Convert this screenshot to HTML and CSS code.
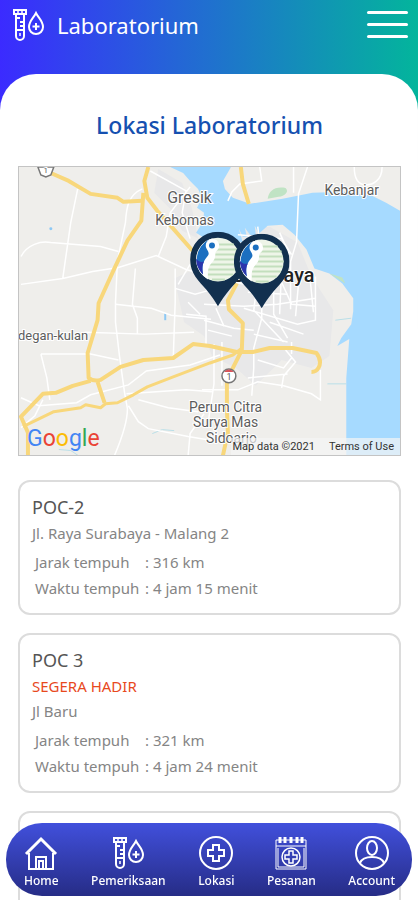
FILE: index.html
```html
<!DOCTYPE html>
<html lang="id">
<head>
  <meta charset="UTF-8">
  <meta name="viewport" content="width=device-width, initial-scale=1.0">
  <title>Laboratorium</title>
  <link rel="stylesheet" href="styles.css">
</head>
<body>
  <!-- shared icons -->
  <svg class="symbols" aria-hidden="true">
    <symbol id="icon-lab" viewBox="0 0 32 34">
      <path d="M2 2h12v4H2z"/>
      <path d="M5 4h2M9 4h2" stroke-width="1.500"/>
      <path d="M4 6v22a4 4 0 0 0 8 0V6M4 10h4M8 14h4M8 18h4M4 22h8"/>
      <path d="M8 25v3" stroke-width="1.500"/>
      <path d="M24 5c-2.500 5-7 8-7 14a7 7 0 0 0 14 0c0-6-4.500-9-7-14z"/>
      <path d="M24 15v7M20.500 18.500h7"/>
    </symbol>
    <symbol id="pin" viewBox="0 0 56 76">
      <path d="M28 0A28 28 0 0 0 0 28c0 14 9 22 16 30 5 6 9 12 12 17 3-5 7-11 12-17 7-8 16-16 16-30A28 28 0 0 0 28 0z" fill="#12304f"/>
      <circle cx="28" cy="28" r="22" fill="#eef5e8"/>
      <path d="M28 13h16M24 18h24M22 23h27M20 28h30M19 33h30M18 38h29M18 43h25M22 48h13" stroke="#c3dfbd" stroke-width="2" fill="none"/>
      <path d="M22 7A22 22 0 0 0 14 45l4 3c-1-10 1-14 5-18 4-5 1-9 4-11 4-3 3-11-5-12z" fill="#fff"/>
      <path d="M19 8A22 22 0 0 0 13 43c-2-11 2-15 5-19 2-3-1-5-2-8-1-4 1-6 3-8z" fill="#1b6fc0"/>
      <path d="M6 27c0 7 3 12 7 16-1-6-1-9 1-13-3 1-6 0-8-3z" fill="#2b35ad"/>
      <circle cx="22" cy="14" r="5" fill="#fff"/>
      <circle cx="22" cy="14" r="3" fill="#1b6fc0"/>
    </symbol>
  </svg>

  <header class="topbar">
    <svg class="topbar-icon" aria-hidden="true"><use href="#icon-lab"/></svg>
    <h1>Laboratorium</h1>
    <button class="menu-toggle" type="button" aria-label="Menu">
      <span></span><span></span><span></span>
    </button>
  </header>

  <main class="sheet">
    <h2 class="section-title">Lokasi Laboratorium</h2>

    <div class="map">
      <svg class="map-canvas" viewBox="0 0 383 290" role="img" aria-label="Peta lokasi laboratorium">
        <rect width="383" height="290" fill="#efeeeb"/>
        <!-- city area -->
        <g fill="#e8e8e9">
          <path d="M140 2l24 14 10 26 6 30-16-8-12-22-16-16z"/>
          <path d="M156 112l26-12 20-36 50-4 28 16 14 34 22 34-4 46-18 12-30-8-26 26-20-18-24-12-8-20-20-14z"/>
        </g>
        <!-- sea -->
        <path d="M152 0l13 6 7 8 8 8 4 9-5 10 7 5-1 9-7 11 9 6 38 4-4-14 4 8h4l-2-9 6 8 5-1-1-9 4 8 9-8 15-1 12 10 12 15 8 19 15 5 13 10 11 15v13l-2 13-10 14-4 8 12-7-3 39v79h54V44l-14-8-14-7-28-4-32 1-30 6-33 5-17-6-8-9-2-8 7-12 1-2z" fill="#a6daff"/>
        <path d="M250 32c1-8 7-13 18-11 4 4-1 8-7 9zM312 107l13 4 3 6z" fill="#c0e3c4"/>
        <path d="M318 154l16-2M310 218h19M134 268l10-4 12 1M40 284l12 1 9 6" stroke="#b9dfe8" fill="none"/>
        <circle cx="32" cy="62" r="1.500" fill="#8cc8f5"/>
        <path d="M147 147v7" stroke="#8cc8f5" stroke-width="2"/>
        <!-- minor roads -->
        <g class="road-minor">
          <path d="M59 22l-7 34-8 56M2 90c6-12 20-16 30-14l50 4 18 5M2 118l42-6 30-7 26-4 38-12 30 14 14 4"/>
          <path d="M124 22c-14 6-16 18-17 34l-8 38-2 42v20l4 34 5 36 3 17c0 20-12 44-16 54"/>
          <path d="M132 4l36 20-4 22 8 26M172 20l-20 26-4 24-8 20M117 102l-3 36 5 14v16M97 138l36 4 20 7 40 4"/>
          <path d="M66 166l60 2 50-2M22 188h50l28 6M22 188l6 24 3 22M2 232l18 8 38-3 14-8 38-10 18-14 44-6 30-10"/>
          <path d="M157 102v34l-2 58M157 122l20 6 14-4M170 136l12 12M168 148l20 2v30"/>
          <path d="M108 228l60-4 26 2M120 234l30 8 30 4M110 240l10 16 10 7 40 8 24 4M170 290l2-22 14-20M2 262l14-12 8-16"/>
          <path d="M242 0l2 14-22 3-8 8-4 9M276 0v26M290 0l-9 27-2 48-6 20v48M337 0c0 14 6 18 12 18s16-4 16-18"/>
          <path d="M240 60l2 16M220 68l44 4 10 16M262 66l10 22M254 94l20 44 24 2"/>
          <path d="M186 138l40 2 34-2 38-6M186 154l30 8 20 2M230 126l40 2M226 142l54 16 18-4v-44M240 112l-4 32 30 32"/>
          <path d="M244 110v42l-8 30v20l-2 28M256 118v30l14 24M264 102l-2 46M282 106l-4 44M292 106l4 40M252 156l34 12M236 168l34 8M198 142l8 18"/>
          <path d="M196 178v40l-6 40M204 176v44M184 224h36l20-8 26 4 28 8 9 6v-30M240 194l26 8 8-10M268 184l10 12-12 14-2 12M230 212l40-4M274 176v12"/>
          <path d="M190 164l24 6M190 108l36 10M160 118l12-20 14-2"/>
        </g>
        <!-- highways -->
        <g class="road-main">
          <path d="M32 6l18 8 22 13 27 4 6 4 19-1M130 0l-4 14 3 17 10 13 16 18 21 24"/>
          <path d="M125 26l-2 28-14 20-14 30-15 33-1 17-10 33 1 25q5 4 12 2l20-13 23-7 30-2 20-14 17 2 27 6 16 0 17-4 23 0 24 5q6 8 2 15-2 4-7 4"/>
          <path d="M72 215l-18 5-17 7-13 1L2 251l7 16v23"/>
          <path d="M79 216l7 21M223 0l2 17 6 20"/>
          <path d="M219 117l-9 17 1 9 14 14-1 27-9 18-6 12v30l1 23-5 23"/>
          <path class="narrow" d="M4 261l31-15 27-4 5-3 15 3 5-4 12-1 16-8 14-8 26-10 37-14 23-8 8-6"/>
        </g>
        <!-- route shields -->
        <g fill="#fff" stroke="#777" stroke-width="1.500">
          <path d="M19 0l3 8 5 2 5-2 3-8z"/>
          <circle cx="211" cy="210" r="7"/>
        </g>
        <path d="M206 206q5-5 10 0z" fill="#d9545a"/>
        <g class="map-label">
          <text x="27" y="6" font-size="8" text-anchor="middle">1</text>
          <text x="211" y="214" font-size="9" text-anchor="middle">1</text>
          <text x="149" y="36" font-size="16">Gresik</text>
          <text x="137" y="58" font-size="14">Kebomas</text>
          <text x="307" y="28" font-size="14">Kebanjar</text>
          <text x="-1" y="174" font-size="13">degan-kulan</text>
          <text x="171" y="246" font-size="14">Perum Citra</text>
          <text x="175" y="261" font-size="14">Surya Mas</text>
          <text x="188" y="277" font-size="14">Sidoarjo</text>
          <text class="city" x="297" y="116" font-size="20" text-anchor="end">Surabaya</text>
        </g>
        <use href="#pin" x="172" y="65" width="56" height="76"/>
        <use href="#pin" x="216" y="67" width="56" height="76"/>
      </svg>
      <div class="map-logo" aria-label="Google"><span class="blue">G</span><span class="red">o</span><span class="yellow">o</span><span class="blue">g</span><span class="green">l</span><span class="red">e</span></div>
      <div class="map-credit">
        <span>Map data ©2021</span>
        <a href="#">Terms of Use</a>
      </div>
    </div>

    <section class="card">
      <h3>POC-2</h3>
      <p>Jl. Raya Surabaya - Malang 2</p>
      <table>
        <tr><th scope="row">Jarak tempuh</th><td>: 316 km</td></tr>
        <tr><th scope="row">Waktu tempuh</th><td>: 4 jam 15 menit</td></tr>
      </table>
    </section>

    <section class="card">
      <h3>POC 3</h3>
      <p class="soon">SEGERA HADIR</p>
      <p>Jl Baru</p>
      <table>
        <tr><th scope="row">Jarak tempuh</th><td>: 321 km</td></tr>
        <tr><th scope="row">Waktu tempuh</th><td>: 4 jam 24 menit</td></tr>
      </table>
    </section>

    <section class="card card-empty"></section>
  </main>

  <nav class="bottom-nav">
    <a href="#">
      <svg viewBox="0 0 34 34" aria-hidden="true">
        <path d="M5 17v16h24V17M12 33V21h10v12M15 33v-8h4v8"/>
        <path d="M2 18L17 3l15 15" stroke-width="3"/>
      </svg>
      Home
    </a>
    <a href="#">
      <svg aria-hidden="true"><use href="#icon-lab"/></svg>
      Pemeriksaan
    </a>
    <a href="#">
      <svg viewBox="0 0 34 34" aria-hidden="true">
        <circle cx="17" cy="17" r="16"/>
        <path d="M14 9h6v5h5v6h-5v5h-6v-5H9v-6h5z"/>
      </svg>
      Lokasi
    </a>
    <a href="#">
      <svg class="thin" viewBox="0 0 34 34" aria-hidden="true">
        <path d="M2 4h30v29H2zM2 10h30M4 12v19h26V12"/>
        <path d="M6 1v6M11 1v6M17 1v6M23 1v6M28 1v6" stroke-width="3"/>
        <circle cx="17" cy="21" r="9" stroke-width="1.500"/>
        <path d="M15 15h4v4h4v4h-4v4h-4v-4h-4v-4h4z" stroke-width="1.500"/>
      </svg>
      Pesanan
    </a>
    <a href="#">
      <svg viewBox="0 0 34 34" aria-hidden="true">
        <circle cx="17" cy="17" r="16"/>
        <ellipse cx="17" cy="12" rx="5" ry="7"/>
        <path d="M5 27c2-5 7-6 12-6s10 1 12 6"/>
      </svg>
      Account
    </a>
  </nav>
</body>
</html>
```
FILE: styles.css
```css
* {
  box-sizing: border-box;
}

body {
  display: flex;
  flex-direction: column;
  height: 100vh;
  margin: 0;
  font-family: "Noto Sans", sans-serif;
  color: #858585;
  background: linear-gradient(to right, #3b2bff 0%, #2070cf 50%, #03b59c 100%);
}

h1, h2, h3, p {
  margin: 0;
  font-weight: 400;
}

.symbols {
  position: absolute;
  width: 0;
  height: 0;
}

/* header */
.topbar {
  display: flex;
  align-items: center;
  padding: 8px 10px 32px 12px;
  color: #fff;
}

.topbar-icon {
  width: 32px;
  height: 34px;
  margin-right: 13px;
  fill: none;
  stroke: #fff;
  stroke-width: 2;
}

.topbar h1 {
  flex: 1;
  font-size: 22px;
  line-height: 34px;
}

.menu-toggle {
  display: flex;
  flex-direction: column;
  gap: 9px;
  width: 41px;
  padding: 0 0 2px;
  background: none;
  border: none;
  cursor: pointer;
}

.menu-toggle span {
  height: 3px;
  border-radius: 2px;
  background: #fff;
}

/* content */
.sheet {
  flex: 1;
  min-height: 0;
  overflow-y: auto;
  scrollbar-width: none;
  padding: 34px 17px 0 18px;
  border-radius: 36px 36px 0 0;
  background: #fff;
}

.section-title {
  margin-bottom: 24px;
  text-align: center;
  font-size: 23px;
  font-weight: 500;
  line-height: 34px;
  color: #1550b0;
}

.map {
  position: relative;
  margin-bottom: 24px;
  overflow: hidden;
  border: 1px solid #c4c4c4;
  font-family: Roboto, sans-serif;
}

.map-canvas {
  display: block;
  width: 100%;
}

.road-minor {
  fill: none;
  stroke: #fff;
  stroke-width: 1.5;
}

.road-main {
  fill: none;
  stroke: #f8d77b;
  stroke-width: 4;
  stroke-linejoin: round;
}

.road-main .narrow {
  stroke-width: 3;
}

.map-label {
  fill: #5c5c5c;
  stroke: #fff;
  stroke-width: 2;
  paint-order: stroke;
}

.map-label .city {
  fill: #222;
  font-weight: 500;
}

.map-logo {
  position: absolute;
  left: 8px;
  bottom: 1px;
  font-size: 23px;
  font-weight: 400;
  line-height: 30px;
}

.blue { color: #4285f4; }
.red { color: #ea4335; }
.yellow { color: #fbbc05; }
.green { color: #34a853; }

.map-credit {
  position: absolute;
  right: 0;
  bottom: 0;
  display: flex;
  gap: 14px;
  padding: 0 6px 0 2px;
  font-size: 11px;
  line-height: 17px;
  color: #333;
  background: rgba(245, 245, 245, 0.7);
}

.map-credit a {
  color: inherit;
  text-decoration: none;
}

.card {
  margin-bottom: 18px;
  padding: 11px 12px 12px;
  border: 2px solid #dcdcdc;
  border-radius: 12px;
  font-size: 15px;
  line-height: 25px;
}

.card h3 {
  font-size: 18px;
  line-height: 28px;
  color: #555;
}

.card .soon {
  color: #e8491d;
}

.card table {
  border-spacing: 0;
  margin: 3px 0 0 3px;
  line-height: 26px;
}

.card th,
.card td {
  padding: 0;
  font-weight: 400;
  text-align: left;
}

.card th {
  min-width: 110px;
}

.card-empty {
  min-height: 140px;
}

/* bottom navigation */
.bottom-nav {
  position: fixed;
  left: 6px;
  right: 6px;
  bottom: 4px;
  display: flex;
  justify-content: space-between;
  padding: 13px 17px 6px 18px;
  border-radius: 36px;
  background: linear-gradient(#4150dc, #262c86);
}

.bottom-nav a {
  display: flex;
  flex-direction: column;
  align-items: center;
  gap: 2px;
  font-size: 12px;
  font-weight: 500;
  line-height: 18px;
  color: #fff;
  text-decoration: none;
}

.bottom-nav svg {
  width: 34px;
  height: 34px;
  fill: none;
  stroke: #fff;
  stroke-width: 2;
}

.bottom-nav .thin {
  stroke-width: 1;
}
```
